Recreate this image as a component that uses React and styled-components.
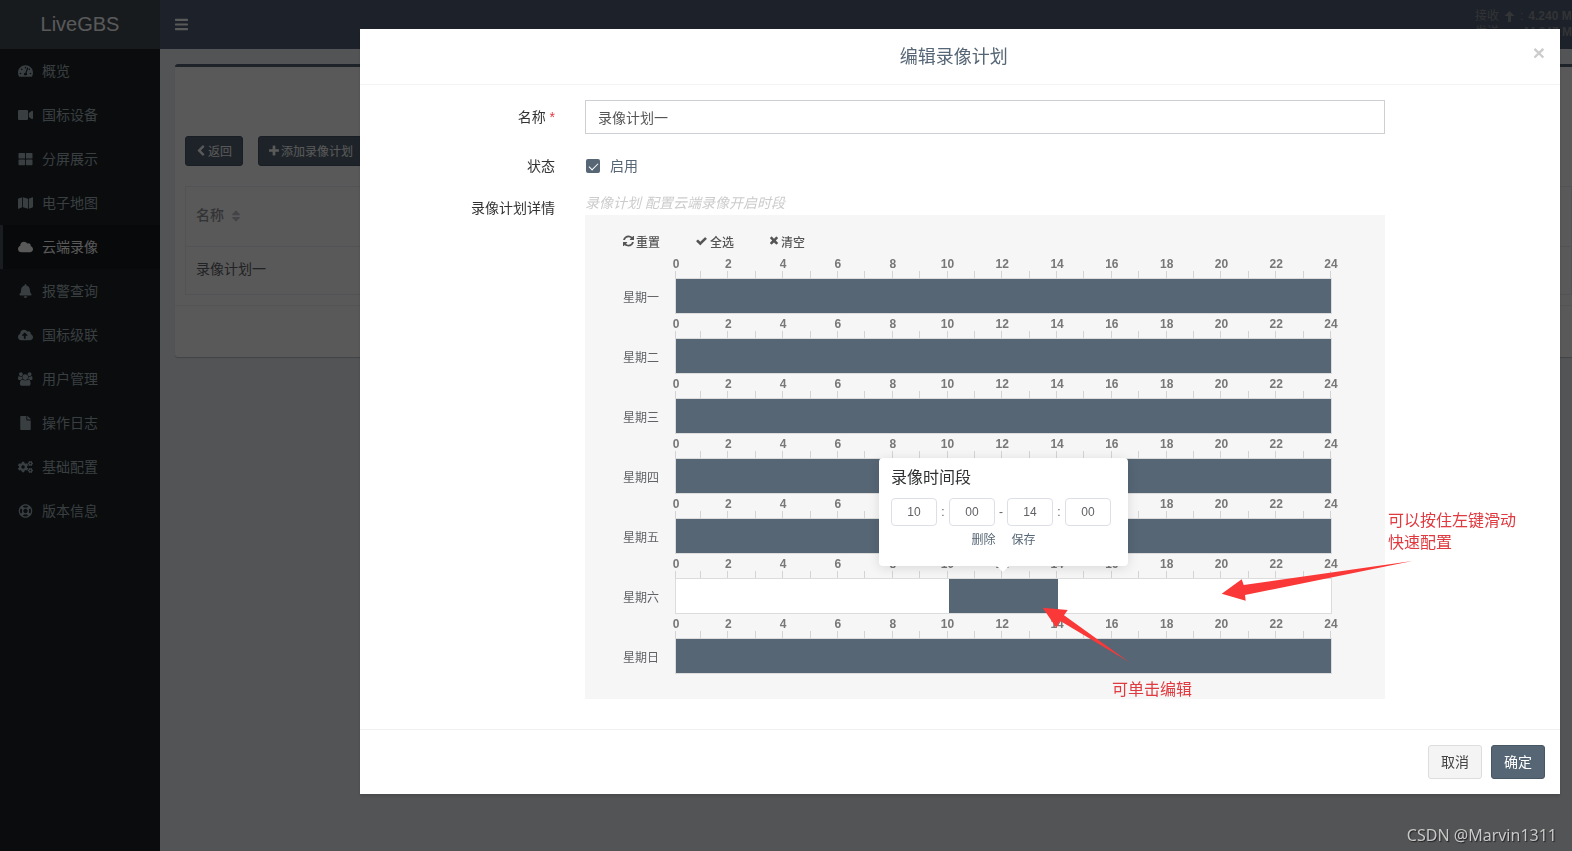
import React, { useState } from 'react';
import styled, { createGlobalStyle } from 'styled-components';
import {
  FaTachometerAlt, FaVideo, FaThLarge, FaMap, FaCloud, FaBell, FaCloudUploadAlt,
  FaFile, FaCogs, FaRegLifeRing, FaBars, FaSort,
} from 'react-icons/fa';

const GlobalStyle = createGlobalStyle`
* { box-sizing:border-box; }
body {
  margin:0;
  overflow:hidden;
  background:#ecf0f5;
  color:#333;
  font-family:"Liberation Sans", "Noto Sans CJK SC", sans-serif;
  font-size:14px;
  line-height:20px;
}
button, input { font-family:inherit; }
`;

const Page = styled.div`
display:flex;
height:100vh;
overflow:hidden;
`;

const Sidebar = styled.aside`
flex:none;
width:160px;
background:#1d2327;
`;

const Logo = styled.a`
display:block;
height:49px;
line-height:48px;
text-align:center;
font-size:20px;
color:#fff;
background:#424d57;
text-decoration:none;
`;

const MenuLink = styled.a`
display:flex;
align-items:center;
gap:9px;
height:44px;
padding-left:15px;
border-left:3px solid ${(p) => (p.$active ? '#4b545c' : 'transparent')};
background:${(p) => (p.$active ? '#171b1e' : 'transparent')};
color:${(p) => (p.$active ? '#fff' : '#a3b3bb')};
text-decoration:none;
svg { width:15px; height:14px; }
`;

const Content = styled.div`
flex:1;
min-width:0;
`;

const TopBar = styled.header`
display:flex;
justify-content:space-between;
height:49px;
padding-left:15px;
background:#545f75;
color:#fff;
`;

const MenuButton = styled.button`
padding:0;
border:0;
background:none;
color:#fff;
line-height:0;
svg { width:13px; height:15px; }
`;

const Traffic = styled.div`
width:97px;
padding-top:8px;
font-size:12px;
line-height:16px;
white-space:nowrap;
color:#8f949b;
div { display:flex; align-items:center; gap:5px; }
svg { width:11px; height:11px; }
`;

const Box = styled.section`
margin:15px 0 0 15px;
border-top:3px solid #566675;
border-radius:3px 0 0 3px;
background:#fff;
box-shadow:0 1px 1px rgba(0, 0, 0, 0.2);
`;

const BoxBody = styled.div`
padding:69px 0 10px 10px;
border-bottom:1px solid #f0f0f0;
`;

const BoxFooter = styled.div`
height:51px;
`;

const Actions = styled.div`
display:flex;
gap:15px;
margin-bottom:20px;
`;

const ActionButton = styled.button`
display:flex;
align-items:center;
gap:2px;
height:30px;
padding:0 10px 2px;
border:1px solid #465665;
border-radius:3px;
background:#566675;
color:#fff;
font-size:12px;
svg { width:${(p) => p.$icon}; height:11px; }
`;

const Table = styled.table`
width:100%;
border-collapse:collapse;
border:1px solid #ebeef5;
text-align:left;
color:#606266;
th { height:60px; padding:0 10px 4px; border-bottom:1px solid #ebeef5; font-weight:500; color:#909399; }
td { height:48px; padding:0 10px 4px; }
th svg { margin-left:7px; width:10px; vertical-align:middle; color:#c0c4cc; }
`;

const Backdrop = styled.div`
position:fixed;
inset:0;
display:flex;
justify-content:flex-end;
align-items:flex-start;
padding:29px 12px 0 360px;
background:rgba(0, 0, 0, 0.65);
`;

const Modal = styled.div`
flex:1;
background:#fff;
box-shadow:0 2px 3px rgba(0, 0, 0, 0.15);
`;

const ModalHeader = styled.div`
display:flex;
align-items:flex-start;
padding:15px;
border-bottom:1px solid #f4f4f4;
`;

const ModalTitle = styled.h4`
flex:1;
margin:0;
padding-top:1px;
font-size:18px;
font-weight:400;
line-height:24px;
text-align:center;
color:#566675;
`;

const CloseButton = styled.button`
padding:0;
border:0;
background:none;
color:#ccc;
font-size:21px;
font-weight:700;
line-height:18px;
`;

const ModalBody = styled.form`
display:flex;
flex-direction:column;
padding:15px;
`;

const FormRow = styled.div`
display:grid;
grid-template-columns:195fr 830fr 145fr;
margin-bottom:15px;
`;

const FormLabel = styled.label`
padding:7px 15px 0 0;
text-align:right;
color:#333;
`;

const Required = styled.span`
color:#e0393f;
`;

const Field = styled.div`
padding:0 15px;
`;

const TextInput = styled.input`
display:block;
width:100%;
height:34px;
padding:0 12px;
border:1px solid #ccd0d4;
border-radius:0;
color:#555;
font-size:14px;
`;

const CheckLabel = styled.label`
display:flex;
align-items:center;
gap:10px;
padding:7px 0 0 1px;
color:#566675;
`;

const CheckBox = styled.input`
appearance:none;
width:14px;
height:14px;
margin:0;
border-radius:2px;
background:#566675;
display:grid;
place-items:center;
&:checked::after {
  content:'';
  width:4px;
  height:8px;
  margin-bottom:2px;
  border:solid #fff;
  border-width:0 1px 1px 0;
  transform:rotate(45deg);
}
`;

const Hint = styled.div`
line-height:24px;
font-style:italic;
color:#ccc;
`;

const Schedule = styled.div`
position:relative;
padding:15px 53px 25px 38px;
background:#f6f6f6;
color:#606266;
font-size:12px;
`;

const Tools = styled.div`
display:flex;
gap:35px;
height:24px;
padding-bottom:2px;
`;

const ToolButton = styled.button`
display:flex;
align-items:center;
gap:2px;
padding:0;
border:0;
background:none;
color:#555;
font-size:12px;
font-weight:500;
svg { width:${(p) => p.$icon}; height:12px; }
`;

const DayRow = styled.div`
display:grid;
grid-template-columns:52px 1fr;
`;

const DayName = styled.div`
padding-top:28px;
line-height:32px;
`;

const Ruler = styled.div`
display:grid;
grid-template-columns:1px 25px repeat(23, 1fr);
height:24px;
padding-right:1px;
`;

const Hour = styled.div`
display:flex;
flex-direction:column;
justify-content:space-between;
align-items:flex-end;
`;

const HourText = styled.span`
width:24px;
margin-right:-12px;
text-align:center;
font-weight:700;
line-height:20px;
height:16px;
color:#777;
`;

const Tick = styled.i`
width:1px;
height:7px;
background:#d4d4d4;
`;

const Track = styled.div`
display:grid;
grid-template-columns:${(p) => p.$columns};
height:36px;
border:1px solid #dcdcdc;
background:#fff;
`;

const Period = styled.button`
grid-column:2;
padding:0;
border:0;
background:#566675;
`;

const Popover = styled.div`
position:absolute;
left:calc(50% + 18px);
top:243px;
width:249px;
height:108px;
margin-left:-124px;
padding:10px 12px;
border-radius:4px;
background:#fff;
box-shadow:0 2px 12px rgba(0, 0, 0, 0.12);
&::after {
  content:'';
  position:absolute;
  left:118px;
  top:108px;
  border:6px solid transparent;
  border-top-color:#fff;
  border-bottom:0;
}
`;

const PopoverTitle = styled.div`
margin-bottom:10px;
font-size:16px;
line-height:20px;
color:#303133;
`;

const TimeRow = styled.div`
display:flex;
align-items:center;
span { width:12px; text-align:center; }
`;

const TimeInput = styled.input`
width:46px;
height:28px;
padding:0;
border:1px solid #dcdfe6;
border-radius:4px;
text-align:center;
font-size:12px;
color:#606266;
`;

const PopoverLinks = styled.div`
display:flex;
justify-content:center;
gap:16px;
padding-top:5px;
`;

const LinkButton = styled.button`
padding:0;
border:0;
background:none;
color:#566675;
font-size:12px;
line-height:18px;
`;

const Arrows = styled.svg`
position:absolute;
right:-28px;
top:346px;
width:192px;
height:100px;
overflow:visible;
pointer-events:none;
`;

const Note = styled.div`
position:absolute;
left:${(p) => p.$left};
top:${(p) => p.$top};
font-size:16px;
line-height:22px;
white-space:nowrap;
color:#e0393f;
`;

const ModalFooter = styled.div`
display:flex;
justify-content:flex-end;
gap:9px;
padding:15px;
border-top:1px solid #f0f0f0;
`;

const FooterButton = styled.button`
height:34px;
padding:0 12px 2px;
border:1px solid ${(p) => (p.$primary ? '#465665' : '#ddd')};
border-radius:3px;
background:${(p) => (p.$primary ? '#566675' : '#f4f4f4')};
color:${(p) => (p.$primary ? '#fff' : '#444')};
font-size:14px;
`;

const Watermark = styled.div`
position:fixed;
right:15px;
bottom:5px;
font-family:"Noto Sans", sans-serif;
font-size:16px;
line-height:22px;
color:#c8c8c8;
text-shadow:1px 1px 1px #222;
`;

function Glyph({ d, box = '0 0 1792 1792' }) {
  return (
    <svg viewBox={box} fill="currentColor" aria-hidden="true">
      <path d={d} />
    </svg>
  );
}

const RefreshIcon = () => (
  <Glyph
    box="128 128 1536 1536"
    d="M1639 1056q0 5-1 7-64 268-268 434.500t-478 166.500q-146 0-282.500-55t-243.500-157l-129 129q-19 19-45 19t-45-19-19-45v-448q0-26 19-45t45-19h448q26 0 45 19t19 45-19 45l-137 137q71 66 161 102t187 36q134 0 250-65t186-179q11-17 53-117 8-23 30-23h192q13 0 22.500 9.500t9.500 22.500zm25-800v448q0 26-19 45t-45 19h-448q-26 0-45-19t-19-45 19-45l138-138q-148-137-349-137-134 0-250 65t-186 179q-11 17-53 117-8 23-30 23h-199q-13 0-22.500-9.500t-9.500-22.500v-7q65-268 270-434.500t480-166.500q146 0 284 55.500t245 156.500l130-129q19-19 45-19t45 19 19 45z"
  />
);

const CheckIcon = () => (
  <Glyph
    d="M1671 566q0 40-28 68l-724 724-136 136q-28 28-68 28t-68-28l-136-136-362-362q-28-28-28-68t28-68l136-136q28-28 68-28t68 28l294 295 656-657q28-28 68-28t68 28l136 136q28 28 28 68z"
  />
);

const TimesIcon = () => (
  <Glyph
    box="250 130 1292 1792"
    d="M1490 1322q0 40-28 68l-136 136q-28 28-68 28t-68-28l-294-294-294 294q-28 28-68 28t-68-28l-136-136q-28-28-28-68t28-68l294-294-294-294q-28-28-28-68t28-68l136-136q28-28 68-28t68 28l294 294 294-294q28-28 68-28t68 28l136 136q28 28 28 68t-28 68l-294 294 294 294q28 28 28 68z"
  />
);

const PlusIcon = () => (
  <Glyph
    box="192 128 1408 1408"
    d="M1600 736v192q0 40-28 68t-68 28h-416v416q0 40-28 68t-68 28h-192q-40 0-68-28t-28-68v-416h-416q-40 0-68-28t-28-68v-192q0-40 28-68t68-28h416v-416q0-40 28-68t68-28h192q40 0 68 28t28 68v416h416q40 0 68 28t28 68z"
  />
);

const BackIcon = () => (
  <Glyph
    box="410 0 1036 1664"
    d="M1427 301l-531 531 531 531q19 19 19 45t-19 45l-166 166q-19 19-45 19t-45-19l-742-742q-19-19-19-45t19-45l742-742q19-19 45-19t45 19l166 166q19 19 19 45t-19 45z"
  />
);

const GroupIcon = () => (
  <Glyph
    box="-64 0 1984 1792"
    d="M529 896q-162 5-265 128h-134q-82 0-138-40.500t-56-118.500q0-353 124-353 6 0 43.500 21t97.500 42.500 119 21.500q67 0 133-23-5 37-5 66 0 139 81 256zm1071 637q0 120-73 189.500t-194 69.500h-874q-121 0-194-69.500t-73-189.500q0-53 3.500-103.500t14-109 26.500-108.500 43-97.500 62-81 85.500-53.500 111.500-20q10 0 43 21.500t73 48 107 48 135 21.500 135-21.500 107-48 73-48 43-21.500q61 0 111.500 20t85.500 53.500 62 81 43 97.500 26.500 108.500 14 109 3.500 103.500zm-1024-1277q0 106-75 181t-181 75-181-75-75-181 75-181 181-75 181 75 75 181zm704 384q0 159-112.500 271.500t-271.500 112.500-271.500-112.500-112.500-271.500 112.500-271.500 271.500-112.500 271.500 112.500 112.500 271.500zm576 225q0 78-56 118.500t-138 40.500h-134q-103-123-265-128 81-117 81-256 0-29-5-66 66 23 133 23 59 0 119-21.500t97.500-42.500 43.500-21q124 0 124 353zm-128-609q0 106-75 181t-181 75-181-75-75-181 75-181 181-75 181 75 75 181z"
  />
);

const UpIcon = () => <Glyph box="0 0 11 11" d="M5.500 0L10.500 5H7V11H4V5H0.500Z" />;

const menus = [
  [FaTachometerAlt, '概览'],
  [FaVideo, '国标设备'],
  [FaThLarge, '分屏展示'],
  [FaMap, '电子地图'],
  [FaCloud, '云端录像'],
  [FaBell, '报警查询'],
  [FaCloudUploadAlt, '国标级联'],
  [GroupIcon, '用户管理'],
  [FaFile, '操作日志'],
  [FaCogs, '基础配置'],
  [FaRegLifeRing, '版本信息'],
];

const hours = Array.from({ length: 25 }, (_, i) => i);

const week = [
  { name: '星期一', from: 0, to: 24 },
  { name: '星期二', from: 0, to: 24 },
  { name: '星期三', from: 0, to: 24 },
  { name: '星期四', from: 0, to: 24 },
  { name: '星期五', from: 0, to: 24 },
  { name: '星期六', from: 10, to: 14 },
  { name: '星期日', from: 0, to: 24 },
];

function Day({ name, from, to }) {
  return (
    <DayRow>
      <DayName>{name}</DayName>
      <div>
        <Ruler>
          {hours.map((h) => (
            <Hour key={h}>
              <HourText>{h % 2 === 0 ? h : ''}</HourText>
              <Tick />
            </Hour>
          ))}
        </Ruler>
        <Track $columns={`${from}fr ${to - from}fr ${24 - to}fr`}>
          <Period type="button" aria-label={`${name} ${from}:00-${to}:00`} />
        </Track>
      </div>
    </DayRow>
  );
}

function TimePopover() {
  return (
    <Popover>
      <PopoverTitle>录像时间段</PopoverTitle>
      <TimeRow>
        <TimeInput defaultValue="10" aria-label="开始时" />
        <span>:</span>
        <TimeInput defaultValue="00" aria-label="开始分" />
        <span>-</span>
        <TimeInput defaultValue="14" aria-label="结束时" />
        <span>:</span>
        <TimeInput defaultValue="00" aria-label="结束分" />
      </TimeRow>
      <PopoverLinks>
        <LinkButton type="button">删除</LinkButton>
        <LinkButton type="button">保存</LinkButton>
      </PopoverLinks>
    </Popover>
  );
}

function EditModal() {
  const [enabled, setEnabled] = useState(true);
  return (
    <Modal role="dialog" aria-labelledby="plan-title">
      <ModalHeader>
        <ModalTitle id="plan-title">编辑录像计划</ModalTitle>
        <CloseButton type="button" aria-label="关闭">×</CloseButton>
      </ModalHeader>
      <ModalBody>
        <FormRow>
          <FormLabel htmlFor="plan-name">
            名称
            {' '}
            <Required>*</Required>
          </FormLabel>
          <Field>
            <TextInput id="plan-name" defaultValue="录像计划一" />
          </Field>
        </FormRow>
        <FormRow>
          <FormLabel htmlFor="plan-enabled">状态</FormLabel>
          <Field>
            <CheckLabel>
              <CheckBox
                id="plan-enabled"
                type="checkbox"
                checked={enabled}
                onChange={(e) => setEnabled(e.target.checked)}
              />
              启用
            </CheckLabel>
          </Field>
        </FormRow>
        <FormRow>
          <FormLabel as="div">录像计划详情</FormLabel>
          <Field>
            <Hint>录像计划 配置云端录像开启时段</Hint>
            <Schedule>
              <Tools>
                <ToolButton type="button" $icon="11px">
                  <RefreshIcon />
                  重置
                </ToolButton>
                <ToolButton type="button" $icon="13px">
                  <CheckIcon />
                  全选
                </ToolButton>
                <ToolButton type="button" $icon="10px">
                  <TimesIcon />
                  清空
                </ToolButton>
              </Tools>
              {week.map((day) => <Day key={day.name} {...day} />)}
              <TimePopover />
              <Arrows viewBox="0 0 192 100" fill="#fb3838">
                <path d="M0.700 32.700L20.700 18.300L22.700 24L191.300 0L24 34L24.700 39.700Z" />
                <path d="M-178.300 46.700L-153.300 49L-157 54.300L-92 101L-160.700 60L-164.700 66.700Z" />
              </Arrows>
              <Note $left="calc(100% + 3px)" $top="295px">
                可以按住左键滑动
                <br />
                快速配置
              </Note>
              <Note $left="calc(66% - 1px)" $top="464px">可单击编辑</Note>
            </Schedule>
          </Field>
        </FormRow>
      </ModalBody>
      <ModalFooter>
        <FooterButton type="button">取消</FooterButton>
        <FooterButton type="button" $primary>确定</FooterButton>
      </ModalFooter>
    </Modal>
  );
}

function App() {
  return (
    <>
      <GlobalStyle />
      <Page>
        <Sidebar>
          <Logo href="#/">LiveGBS</Logo>
          <nav>
            {menus.map(([Icon, text]) => (
              <MenuLink key={text} href="#/" $active={text === '云端录像'}>
                <Icon />
                {text}
              </MenuLink>
            ))}
          </nav>
        </Sidebar>
        <Content>
          <TopBar>
            <MenuButton type="button" aria-label="菜单"><FaBars /></MenuButton>
            <Traffic>
              <div>
                接收
                <UpIcon />
                :
                <b>4.240 M</b>
              </div>
              <div>
                发送
                <UpIcon />
                :
                <b>44.847 M</b>
              </div>
            </Traffic>
          </TopBar>
          <Box>
            <BoxBody>
              <Actions>
                <ActionButton type="button" $icon="10px">
                  <BackIcon />
                  返回
                </ActionButton>
                <ActionButton type="button" $icon="10px">
                  <PlusIcon />
                  添加录像计划
                </ActionButton>
              </Actions>
              <Table>
                <thead>
                  <tr>
                    <th>
                      名称
                      <FaSort />
                    </th>
                  </tr>
                </thead>
                <tbody>
                  <tr>
                    <td>录像计划一</td>
                  </tr>
                </tbody>
              </Table>
            </BoxBody>
            <BoxFooter />
          </Box>
        </Content>
      </Page>
      <Backdrop>
        <EditModal />
      </Backdrop>
      <Watermark>CSDN @Marvin1311</Watermark>
    </>
  );
}

export default App;
